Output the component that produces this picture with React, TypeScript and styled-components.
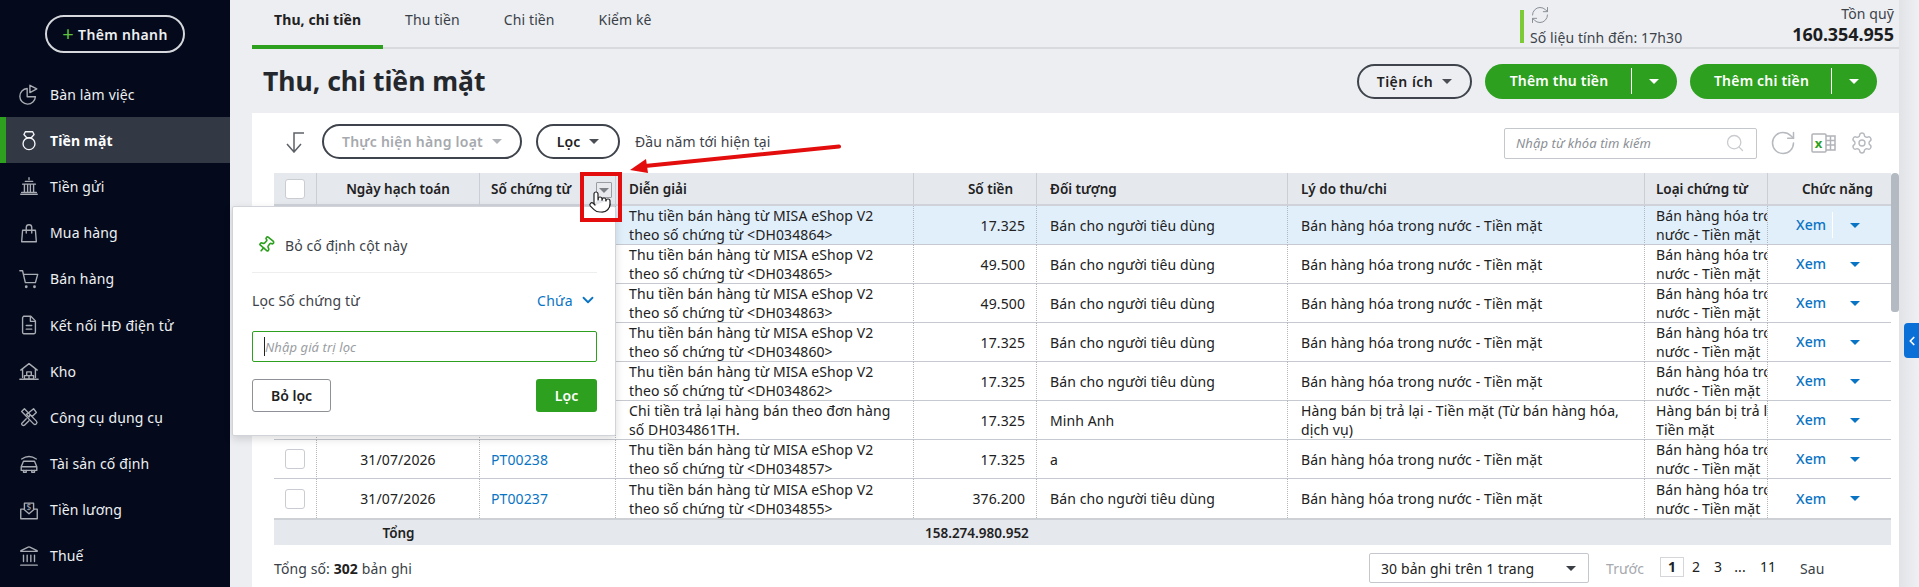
import React from "react";
import styled, { createGlobalStyle } from "styled-components";
import { ChevronDown, ChevronLeft, Landmark, Pin, Pointer, RefreshCw, RotateCw, Search, Settings } from "lucide-react";

const Global = createGlobalStyle`
  html, body { margin: 0; padding: 0; background: #eceef2; }
  * { box-sizing: border-box; }
  body { font-family: "Noto Sans", "Open Sans", sans-serif; font-size: 14px; letter-spacing: .1px; color: #212121; }
`;

const Page = styled.div`
  position: relative;
  display: flex;
  width: 1919px;
  height: 587px;
  overflow: hidden;
  background: #eceef2;
`;

const Sidebar = styled.aside`
  width: 230px;
  flex: none;
  background: #040a1c;
  display: flex;
  flex-direction: column;
  color: #f2f3f5;
`;

const AddButton = styled.button`
  align-self: flex-start;
  margin: 15px 0 18px 45px;
  width: 140px;
  height: 38px;
  border: 2px solid #d5d7dc;
  border-radius: 19px;
  background: transparent;
  color: #eef0f2;
  font: 600 14px "Noto Sans", sans-serif;
  letter-spacing: .35px;
  display: flex;
  align-items: center;
  justify-content: center;
  gap: 4px;
  padding: 0;
`;

const Plus = styled.span`
  color: #5fc23f;
  font-size: 20px;
  font-weight: 400;
  line-height: 20px;
`;

const NavItem = styled.div<{ $active?: boolean }>`
  height: 46.2px;
  flex: none;
  display: flex;
  align-items: center;
  gap: 10px;
  padding-left: ${(p) => (p.$active ? "12px" : "18px")};
  background: ${(p) => (p.$active ? "#333845" : "transparent")};
  border-left: ${(p) => (p.$active ? "6px solid #2ea01f" : "0")};
  font-weight: ${(p) => (p.$active ? 700 : 400)};
  font-size: 14px;
  letter-spacing: .15px;
  color: ${(p) => (p.$active ? "#fff" : "#eef0f2")};
  svg { flex: none; color: ${(p) => (p.$active ? "#f4f4f6" : "#a9acb3")}; }
`;

const Main = styled.main`
  width: 1669px;
  flex: none;
  display: flex;
  flex-direction: column;
`;

const TopBar = styled.header`
  height: 49px;
  flex: none;
  margin-left: 22px;
  border-bottom: 2px solid #d8dade;
  display: flex;
  justify-content: space-between;
  position: relative;
`;

const Tabs = styled.nav`
  display: flex;
`;

const Tab = styled.div<{ $active?: boolean }>`
  height: 49px;
  padding: 0 22px 6px;
  display: flex;
  align-items: center;
  font-weight: ${(p) => (p.$active ? 700 : 400)};
  color: ${(p) => (p.$active ? "#212121" : "#3a3f47")};
  border-bottom: 4px solid ${(p) => (p.$active ? "#2ea01f" : "transparent")};
`;

const TopRight = styled.div`
  display: flex;
  padding-right: 5px;
  gap: 110px;
`;

const Status = styled.div`
  margin-top: 10px;
  height: 33px;
  border-left: 4px solid #7ccb36;
  padding-left: 6px;
  display: flex;
  flex-direction: column;
  font-size: 14px;
  color: #3d4249;
  line-height: 19px;
  svg { flex: none; margin-top: -5px; margin-bottom: 3px; color: #8b9097; display: block; }
  span { flex: none; }
`;

const Balance = styled.div`
  text-align: right;
  padding-top: 4px;
  font-size: 14px;
  line-height: 19px;
  color: #3d4249;
`;

const BalanceValue = styled.div`
  font-size: 18px;
  font-weight: 700;
  line-height: 23px;
  letter-spacing: -.1px;
  color: #1b1d21;
`;

const TitleRow = styled.div`
  height: 64px;
  flex: none;
  padding: 0 22px 0 33px;
  display: flex;
  align-items: center;
  justify-content: space-between;
`;

const Title = styled.h1`
  margin: 0;
  font-size: 26.5px;
  font-weight: 700;
  letter-spacing: 0;
  color: #24272c;
`;

const Actions = styled.div`
  display: flex;
  gap: 13px;
`;

const OutlineButton = styled.button<{ $w: number; $muted?: boolean }>`
  width: ${(p) => p.$w}px;
  height: 35px;
  border: 2px solid #3f444c;
  border-radius: 18px;
  background: #fff;
  font: 600 14px "Noto Sans", sans-serif;
  letter-spacing: .25px;
  color: ${(p) => (p.$muted ? "#a6a9ae" : "#212121")};
  display: flex;
  align-items: center;
  justify-content: center;
  gap: 9px;
  padding: 0;
`;

const UtilButton = styled(OutlineButton)`
  background: transparent;
  letter-spacing: .5px;
`;

const Caret = styled.i<{ $color?: string; $size?: number }>`
  display: inline-block;
  width: 0;
  height: 0;
  border-left: ${(p) => p.$size ?? 5}px solid transparent;
  border-right: ${(p) => p.$size ?? 5}px solid transparent;
  border-top: ${(p) => p.$size ?? 5}px solid ${(p) => p.$color ?? "#4b4f55"};
`;

const SplitButton = styled.div<{ $w: number }>`
  width: ${(p) => p.$w}px;
  height: 35px;
  border-radius: 18px;
  background: #2ea01f;
  color: #fff;
  font-weight: 600;
  letter-spacing: .2px;
  display: flex;
  align-items: center;
`;

const SplitLabel = styled.span`
  flex: 1;
  height: 26px;
  line-height: 25px;
  text-align: center;
  padding-left: 2px;
  border-right: 1px solid #fff;
`;

const SplitCaret = styled.span`
  width: 45px;
  flex: none;
  display: flex;
  justify-content: center;
  padding-right: 2px;
`;

const Panel = styled.section`
  flex: 1;
  min-height: 0;
  margin-left: 22px;
  padding-left: 22px;
  background: #fff;
  display: flex;
  flex-direction: column;
`;

const Toolbar = styled.div`
  height: 60px;
  flex: none;
  display: flex;
  align-items: center;
  padding: 0 25px 4px 0;
`;

const SortIcon = styled.span`
  width: 48px;
  flex: none;
  padding-left: 10px;
  display: flex;
`;

const FilterButton = styled(OutlineButton)`
  margin-left: 14px;
  letter-spacing: .1px;
`;

const BulkButton = styled(OutlineButton)``;

const RangeLabel = styled.span`
  margin-left: 15px;
  color: #3d4249;
  flex: 1;
`;

const SearchBox = styled.div`
  width: 253px;
  height: 31px;
  margin-top: 4px;
  border: 1px solid #c4c7cc;
  border-radius: 2px;
  display: flex;
  align-items: center;
  justify-content: space-between;
  padding: 0 11px;
  font-style: italic;
  font-size: 13px;
  color: #8b8f95;
`;

const ToolIcons = styled.div`
  display: flex;
  align-items: center;
  gap: 14px;
  margin-left: 12px;
  margin-top: 3px;
  color: #b6b9be;
`;

const TableArea = styled.div`
  display: flex;
  flex: none;
`;

const Grid = styled.table`
  width: 1617px;
  table-layout: fixed;
  border-collapse: separate;
  border-spacing: 0;
  flex: none;
`;

const Th = styled.th<{ $align?: string; $pr?: number; $pl?: number }>`
  height: 33px;
  background: #e5e8ed;
  border-bottom: 2px solid #cfd3d9;
  border-right: 1px solid #cbcfd5;
  padding: 0 ${(p) => p.$pr ?? 11}px 0 ${(p) => p.$pl ?? 11}px;
  text-align: ${(p) => p.$align ?? "left"};
  font-weight: 600;
  font-size: 13.5px;
  letter-spacing: 0;
  white-space: nowrap;
  overflow: hidden;
  &:last-child { border-right: 0; }
`;

const Td = styled.td<{ $align?: string; $selected?: boolean; $last?: boolean; $pad?: number }>`
  height: 39px;
  padding: 0 11px 0 ${(p) => p.$pad ?? 11}px;
  background: ${(p) => (p.$selected ? "#e1effb" : "#fff")};
  border-bottom: ${(p) => (p.$last ? "0" : "1px solid #c6cad0")};
  border-right: 1px dotted #b4b8be;
  text-align: ${(p) => p.$align ?? "left"};
  line-height: 19px;
  font-size: 14px;
  overflow: hidden;
  color: #212121;
  &:last-child { border-right: 0; }
`;

const Clip = styled.div`
  width: 150px;
`;

const DocLink = styled.span`
  color: #0a74c4;
`;

const ActionCell = styled.div`
  display: flex;
  align-items: center;
  height: 26px;
  padding-left: 28px;
`;

const ViewLink = styled.span<{ $split?: boolean }>`
  width: 37px;
  font-weight: 500;
  color: #0a74c4;
  line-height: 26px;
  border-right: 1px solid ${(p) => (p.$split ? "#fff" : "transparent")};
`;

const ActionCaret = styled.span`
  margin-left: 17px;
  display: flex;
`;

const Check = styled.span`
  display: block;
  width: 20px;
  height: 20px;
  margin: 0 auto;
  border: 1px solid #c9ccd1;
  border-radius: 3px;
  background: #fff;
`;

const TotalCell = styled.td<{ $align?: string }>`
  height: 27px;
  background: #e5e8ed;
  border-top: 2px solid #cdd0d5;
  padding: 0 11px;
  font-weight: 600;
  font-size: 13.5px;
  letter-spacing: 0;
  text-align: ${(p) => p.$align ?? "left"};
`;

const Thumb = styled.div`
  width: 8px;
  height: 139px;
  flex: none;
  background: #b4bac2;
  border-radius: 4px 4px 3px 3px;
`;

const Footer = styled.div`
  width: 1617px;
  height: 30px;
  flex: none;
  margin-top: 8px;
  display: flex;
  align-items: center;
  color: #3a3f47;
`;

const FooterTotal = styled.div`
  flex: 1;
  b { font-weight: 700; color: #212121; }
`;

const PageSelect = styled.div`
  width: 220px;
  height: 30px;
  border: 1px solid #c4c7cc;
  border-radius: 2px;
  display: flex;
  align-items: center;
  justify-content: space-between;
  padding: 0 12px 0 11px;
  color: #212121;
`;

const Pager = styled.div`
  display: flex;
  align-items: center;
  margin-left: 17px;
  width: 285px;
`;

const Prev = styled.span`
  color: #a6a9ae;
  width: 54px;
`;

const PageNum = styled.span<{ $current?: boolean; $w: number }>`
  width: ${(p) => p.$w}px;
  height: ${(p) => (p.$current ? "20px" : "auto")};
  line-height: 18px;
  text-align: center;
  border: ${(p) => (p.$current ? "1px solid #d4d6da" : "0")};
  font-weight: ${(p) => (p.$current ? 700 : 400)};
  color: #212121;
  margin-top: -2px;
`;

const Next = styled.span`
  margin-left: 16px;
`;

const Rail = styled.div`
  width: 20px;
  flex: none;
  background: linear-gradient(90deg, #e2e3e6, #eef0f3);
  position: relative;
`;

const SideTab = styled.div`
  position: absolute;
  top: 323px;
  right: 0;
  width: 15px;
  height: 35px;
  background: #0a6fd6;
  border-radius: 4px 0 0 4px;
  display: flex;
  align-items: center;
  justify-content: center;
  color: #fff;
`;

const Popup = styled.div`
  position: absolute;
  left: 232px;
  top: 206px;
  width: 384px;
  height: 230px;
  background: #fff;
  border: 1px solid #d0d3d8;
  border-radius: 2px;
  box-shadow: 0 3px 8px rgba(0, 0, 0, 0.14);
  padding: 0 18px 0 19px;
  display: flex;
  flex-direction: column;
`;

const PinRow = styled.div`
  height: 66px;
  flex: none;
  display: flex;
  align-items: center;
  gap: 10px;
  padding-top: 11px;
  padding-left: 5px;
  border-bottom: 1px solid #eceef0;
  color: #3d4249;
  svg { color: #2ea01f; }
`;

const FilterLabelRow = styled.div`
  height: 58px;
  flex: none;
  display: flex;
  align-items: center;
  justify-content: space-between;
  padding-bottom: 4px;
  color: #3d4249;
`;

const Contains = styled.span`
  color: #0a74c4;
  display: flex;
  align-items: center;
  gap: 6px;
  letter-spacing: .3px;
`;

const FilterInput = styled.div`
  height: 31px;
  flex: none;
  border: 1px solid #2ea01f;
  border-radius: 2px;
  padding-left: 11px;
  display: flex;
  align-items: center;
  font-style: italic;
  font-size: 13px;
  color: #9a9da2;
`;

const Cursor = styled.span`
  width: 1px;
  height: 19px;
  background: #222;
`;

const PopupActions = styled.div`
  margin-top: 17px;
  display: flex;
  justify-content: space-between;
`;

const ClearButton = styled.button`
  width: 79px;
  height: 33px;
  background: #fff;
  border: 1px solid #8e9196;
  border-radius: 3px;
  font: 600 14px "Noto Sans", sans-serif;
  color: #212121;
  padding: 0;
`;

const ApplyButton = styled.button`
  width: 61px;
  height: 33px;
  background: #2ea01f;
  border: 0;
  border-radius: 3px;
  font: 600 14px "Noto Sans", sans-serif;
  color: #fff;
  padding: 0;
`;

const Highlight = styled.div`
  position: absolute;
  left: 580px;
  top: 172px;
  width: 42px;
  height: 50px;
  border: 4px solid #e30d0d;
`;

const ColFilter = styled.div`
  position: absolute;
  left: 596px;
  top: 182px;
  width: 16px;
  height: 16px;
  background: #e8e9ec;
  border: 1px solid #9a9ea4;
  border-radius: 1px;
  display: flex;
  justify-content: center;
  padding-top: 5px;
`;

const Hand = styled.div`
  position: absolute;
  left: 588px;
  top: 190px;
  display: flex;
`;

const Arrow = styled.svg`
  position: absolute;
  left: 625px;
  top: 140px;
`;

const Ic = ({ children }: { children: React.ReactNode }) => (
  <svg width="22" height="22" viewBox="0 0 24 24" fill="none" stroke="currentColor" strokeWidth="1.5" strokeLinecap="round" strokeLinejoin="round">
    {children}
  </svg>
);

const nav: { label: string; icon: React.ReactNode; active?: boolean }[] = [
  { label: "Bàn làm việc", icon: <Ic><path d="M10 6a8.500 8.500 0 1 0 9 9h-9z" /><path d="M13 2.500l7.500 4-7.500 4z" /></Ic> },
  { label: "Tiền mặt", active: true, icon: <Ic><circle cx="12" cy="16" r="6.500" /><path d="M8 3h8l1.500 3-3 3.500h-5l-3-3.500z" /></Ic> },
  { label: "Tiền gửi", icon: <Ic><path d="M12 3v2M8 7h8M5 10h14M7 10v9M10.500 10v9M13.500 10v9M17 10v9M3 21h18M4 19h16" /></Ic> },
  { label: "Mua hàng", icon: <Ic><path d="M5 9h14l1 12.500H4z" /><path d="M9 12V6a3 3 0 0 1 6 0v6" /></Ic> },
  { label: "Bán hàng", icon: <Ic><path d="M2 3h3l3 13h11l2.500-9H6" /><circle cx="9" cy="20.500" r=".8" /><circle cx="18" cy="20.500" r=".8" /></Ic> },
  { label: "Kết nối HĐ điện tử", icon: <Ic><path d="M6 2.500h8l5 5V20a1.500 1.500 0 0 1-1.500 1.500h-11.500A1.500 1.500 0 0 1 5 20V4z" /><path d="M13.500 3v5h5M9 12.500h6M9 16.500h6" /></Ic> },
  { label: "Kho", icon: <Ic><path d="M3 11l9-7 9 7M5 10v9M19 10v9M2 21h20" /><path d="M9.500 13h5v4h-5zM7 17h5v4H7zM12 17h5v4h-5z" /></Ic> },
  { label: "Công cụ dụng cụ", icon: <Ic><path d="M4 6l3-3 13 13.500a2 2 0 0 1-3 3z" /><path d="M20 7l-3-4-6 5-2 1 3 3 1-2 3 1zM9 14l-5 5a2 2 0 0 0 3 2l5-5" /></Ic> },
  { label: "Tài sản cố định", icon: <Ic><path d="M4 6.500Q12 1 20 6.500" /><path d="M6 9h12l2.500 6v4h-17v-4z" /><path d="M4 15h16M6 19v2h3v-2M15 19v2h3v-2" /></Ic> },
  { label: "Tiền lương", icon: <Ic><path d="M7 11V4.500h10V11" /><path d="M3 11h3l6 5 6-5h3v10.500H3z" /><text x="12" y="11.500" fontSize="9" textAnchor="middle" fill="currentColor" stroke="none">$</text></Ic> },
  { label: "Thuế", icon: <Landmark size={22} strokeWidth={1.5} /> },
];

const G = "Bán hàng hóa trong nước - Tiền mặt";
const C = "Bán cho người tiêu dùng";
const rows = [
  { d: "31/07/2026", no: "PT00244", l1: "Thu tiền bán hàng từ MISA eShop V2", l2: "theo số chứng từ <DH034864>", amt: "17.325", who: C, why: G, type: G, sel: true },
  { d: "31/07/2026", no: "PT00243", l1: "Thu tiền bán hàng từ MISA eShop V2", l2: "theo số chứng từ <DH034865>", amt: "49.500", who: C, why: G, type: G },
  { d: "31/07/2026", no: "PT00242", l1: "Thu tiền bán hàng từ MISA eShop V2", l2: "theo số chứng từ <DH034863>", amt: "49.500", who: C, why: G, type: G },
  { d: "31/07/2026", no: "PT00241", l1: "Thu tiền bán hàng từ MISA eShop V2", l2: "theo số chứng từ <DH034860>", amt: "17.325", who: C, why: G, type: G },
  { d: "31/07/2026", no: "PT00240", l1: "Thu tiền bán hàng từ MISA eShop V2", l2: "theo số chứng từ <DH034862>", amt: "17.325", who: C, why: G, type: G },
  { d: "31/07/2026", no: "PC00239", l1: "Chi tiền trả lại hàng bán theo đơn hàng", l2: "số DH034861TH.", amt: "17.325", who: "Minh Anh", why: "Hàng bán bị trả lại - Tiền mặt (Từ bán hàng hóa, dịch vụ)", type: "Hàng bán bị trả lại - Tiền mặt" },
  { d: "31/07/2026", no: "PT00238", l1: "Thu tiền bán hàng từ MISA eShop V2", l2: "theo số chứng từ <DH034857>", amt: "17.325", who: "a", why: G, type: G },
  { d: "31/07/2026", no: "PT00237", l1: "Thu tiền bán hàng từ MISA eShop V2", l2: "theo số chứng từ <DH034855>", amt: "376.200", who: C, why: G, type: G },
];

const widths = [43, 163, 136, 298, 123, 251, 357, 123, 123];

export default function App() {
  return (
    <Page>
      <Global />
      <Sidebar>
        <AddButton><Plus>+</Plus>Thêm nhanh</AddButton>
        {nav.map((n) => (
          <NavItem key={n.label} $active={n.active}>
            {n.icon}
            <span>{n.label}</span>
          </NavItem>
        ))}
      </Sidebar>
      <Main>
        <TopBar>
          <Tabs>
            <Tab $active>Thu, chi tiền</Tab>
            <Tab>Thu tiền</Tab>
            <Tab>Chi tiền</Tab>
            <Tab>Kiểm kê</Tab>
          </Tabs>
          <TopRight>
            <Status>
              <RefreshCw size={20} strokeWidth={1.2} />
              <span>Số liệu tính đến: 17h30</span>
            </Status>
            <Balance>
              Tồn quỹ
              <BalanceValue>160.354.955</BalanceValue>
            </Balance>
          </TopRight>
        </TopBar>
        <TitleRow>
          <Title>Thu, chi tiền mặt</Title>
          <Actions>
            <UtilButton $w={115}>Tiện ích <Caret /></UtilButton>
            <SplitButton $w={192}><SplitLabel>Thêm thu tiền</SplitLabel><SplitCaret><Caret $color="#fff" /></SplitCaret></SplitButton>
            <SplitButton $w={187}><SplitLabel>Thêm chi tiền</SplitLabel><SplitCaret><Caret $color="#fff" /></SplitCaret></SplitButton>
          </Actions>
        </TitleRow>
        <Panel>
          <Toolbar>
            <SortIcon>
              <svg width="22" height="24" viewBox="0 0 22 24" fill="none" stroke="#5d6167" strokeWidth="1.5">
                <path d="M20 4H10v19M3 15l7 8 7-8" />
              </svg>
            </SortIcon>
            <BulkButton $w={200} $muted>Thực hiện hàng loạt <Caret $color="#b0b3b8" /></BulkButton>
            <FilterButton $w={84}>Lọc <Caret /></FilterButton>
            <RangeLabel>Đầu năm tới hiện tại</RangeLabel>
            <SearchBox>
              Nhập từ khóa tìm kiếm
              <Search size={20} color="#c9cbcf" strokeWidth={1.6} />
            </SearchBox>
            <ToolIcons>
              <RotateCw size={28} strokeWidth={1.3} />
              <svg width="25" height="24" viewBox="0 0 25 24" fill="none" stroke="#b0b3b8" strokeWidth="1.5">
                <rect x="1" y="3" width="14" height="18" rx="1" fill="#fff" />
                <path d="M15 5h9v14h-9M15 9.500h9M15 14h9M19.500 5v14" />
                <text x="7.500" y="16.500" fontSize="13" fontWeight="700" fontFamily="Noto Sans" textAnchor="middle" fill="#2ea01f" stroke="none">x</text>
              </svg>
              <Settings size={24} strokeWidth={1.4} />
            </ToolIcons>
          </Toolbar>
          <TableArea>
            <Grid>
              <colgroup>
                {widths.map((w, i) => <col key={i} style={{ width: w }} />)}
              </colgroup>
              <thead>
                <tr>
                  <Th $pl={0} $pr={0}><Check /></Th>
                  <Th $align="center">Ngày hạch toán</Th>
                  <Th>Số chứng từ</Th>
                  <Th $pl={13}>Diễn giải</Th>
                  <Th $align="right" $pr={23}>Số tiền</Th>
                  <Th $pl={13}>Đối tượng</Th>
                  <Th $pl={13}>Lý do thu/chi</Th>
                  <Th>Loại chứng từ</Th>
                  <Th $pl={34} $pr={0}>Chức năng</Th>
                </tr>
              </thead>
              <tbody>
                {rows.map((r, i) => {
                  const last = i === rows.length - 1;
                  return (
                    <tr key={r.no}>
                      <Td $selected={r.sel} $last={last}><Check /></Td>
                      <Td $selected={r.sel} $last={last} $align="center">{r.d}</Td>
                      <Td $selected={r.sel} $last={last}><DocLink>{r.no}</DocLink></Td>
                      <Td $selected={r.sel} $last={last} $pad={13}>{r.l1}<br />{r.l2}</Td>
                      <Td $selected={r.sel} $last={last} $align="right">{r.amt}</Td>
                      <Td $selected={r.sel} $last={last} $pad={13}>{r.who}</Td>
                      <Td $selected={r.sel} $last={last} $pad={13}>{r.why}</Td>
                      <Td $selected={r.sel} $last={last}><Clip>{r.type}</Clip></Td>
                      <Td $selected={r.sel} $last={last} $pad={0}>
                        <ActionCell>
                          <ViewLink $split={r.sel}>Xem</ViewLink>
                          <ActionCaret><Caret $color="#0a74c4" /></ActionCaret>
                        </ActionCell>
                      </Td>
                    </tr>
                  );
                })}
                <tr>
                  <TotalCell />
                  <TotalCell $align="center">Tổng</TotalCell>
                  <TotalCell />
                  <TotalCell />
                  <TotalCell $align="right">158.274.980.952</TotalCell>
                  <TotalCell />
                  <TotalCell />
                  <TotalCell />
                  <TotalCell />
                </tr>
              </tbody>
            </Grid>
            <Thumb />
          </TableArea>
          <Footer>
            <FooterTotal>Tổng số: <b>302</b> bản ghi</FooterTotal>
            <PageSelect>30 bản ghi trên 1 trang <Caret $color="#3a3f47" /></PageSelect>
            <Pager>
              <Prev>Trước</Prev>
              <PageNum $current $w={24}>1</PageNum>
              <PageNum $w={24}>2</PageNum>
              <PageNum $w={20}>3</PageNum>
              <PageNum $w={24}>...</PageNum>
              <PageNum $w={32}>11</PageNum>
              <Next>Sau</Next>
            </Pager>
          </Footer>
        </Panel>
      </Main>
      <Rail>
        <SideTab><ChevronLeft size={14} strokeWidth={3} /></SideTab>
      </Rail>
      <Popup>
        <PinRow>
          <Pin size={18} strokeWidth={2.2} style={{ transform: "rotate(40deg)" }} />
          Bỏ cố định cột này
        </PinRow>
        <FilterLabelRow>
          Lọc Số chứng từ
          <Contains>Chứa <ChevronDown size={18} strokeWidth={2.4} /></Contains>
        </FilterLabelRow>
        <FilterInput><Cursor />Nhập giá trị lọc</FilterInput>
        <PopupActions>
          <ClearButton>Bỏ lọc</ClearButton>
          <ApplyButton>Lọc</ApplyButton>
        </PopupActions>
      </Popup>
      <ColFilter><Caret $color="#7d8187" /></ColFilter>
      <Highlight />
      <Hand><Pointer size={24} fill="#fff" color="#222" strokeWidth={1.2} /></Hand>
      <Arrow width="220" height="36" viewBox="0 0 220 36">
        <path d="M214 6.500L20 26" stroke="#e30d0d" strokeWidth="4" strokeLinecap="round" />
        <path d="M5 30L21 19l2 14z" fill="#e30d0d" />
      </Arrow>
    </Page>
  );
}
